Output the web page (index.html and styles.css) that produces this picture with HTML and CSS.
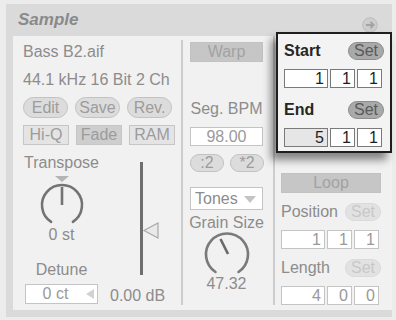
FILE: index.html
```html
<!DOCTYPE html>
<html>
<head>
  <meta charset="UTF-8">
  <title>Sample</title>
  <link rel="stylesheet" href="styles.css">
</head>
<body>
  <div class="panel">
    <div class="header">
      <div class="title">Sample</div>
      <div class="header-btn">
        <svg width="16" height="16" viewBox="0 0 16 16">
          <circle cx="8" cy="8" r="7.3" fill="#cdcdcd" stroke="#bcbcbc"/>
          <path d="M4 8 H11.5 M8.5 5 L11.5 8 L8.5 11" stroke="#a4a4a4" stroke-width="2" fill="none"/>
        </svg>
      </div>
    </div>

    <div class="content">
      <!-- colonne gauche : fichier, boutons, transpose, volume -->
      <div class="col col-left">
        <div class="info">
          <div>Bass B2.aif</div>
          <div>44.1 kHz 16 Bit 2 Ch</div>
        </div>
        <div class="btn-row pills">
          <div class="pill">Edit</div>
          <div class="pill">Save</div>
          <div class="pill">Rev.</div>
        </div>
        <div class="btn-row rects">
          <div class="rect">Hi-Q</div>
          <div class="rect on">Fade</div>
          <div class="rect">RAM</div>
        </div>
        <div class="lower">
          <div class="transpose">
            <div class="label">Transpose</div>
            <svg class="knob" width="50" height="54" viewBox="0 0 50 54">
              <polygon points="18,4 32,4 25,10" fill="#b4b4b4"/>
              <path d="M14.1 49.8 A20 20 0 1 1 35.9 49.8" stroke="#737373" stroke-width="2.6" fill="none" stroke-linecap="round"/>
              <line x1="25" y1="15" x2="25" y2="33" stroke="#737373" stroke-width="2.6"/>
            </svg>
            <div class="label">0 st</div>
            <div class="label detune">Detune</div>
            <div class="field ct">0 ct<span class="ct-arrow"></span></div>
          </div>
          <div class="volume">
            <svg width="70" height="125" viewBox="0 0 70 125">
              <line x1="41.5" y1="8" x2="41.5" y2="121" stroke="#6e6e6e" stroke-width="3"/>
              <polygon points="58,69 58,84 44,76.5" fill="#e9e9e9" stroke="#a8a8a8" stroke-width="1.2"/>
            </svg>
            <div class="db">0.00 dB</div>
          </div>
        </div>
      </div>

      <!-- colonne du milieu : warp -->
      <div class="col col-mid">
        <div class="rect wide warp">Warp</div>
        <div class="label center seg">Seg. BPM</div>
        <div class="field bpm">98.00</div>
        <div class="btn-row halves">
          <div class="pill small">:2</div>
          <div class="pill small">*2</div>
        </div>
        <div class="dropdown">Tones<span class="drop-arrow"></span></div>
        <div class="label center grain">Grain Size</div>
        <svg class="knob" width="50" height="43" viewBox="0 0 50 43">
          <path d="M13.5 40 A21 21 0 1 1 36.5 40" stroke="#7a7a7a" stroke-width="2.6" fill="none" stroke-linecap="round"/>
          <line x1="26" y1="22" x2="18.5" y2="7" stroke="#6a6a6a" stroke-width="2.6"/>
        </svg>
        <div class="label center">47.32</div>
      </div>

      <!-- colonne droite : loop -->
      <div class="col col-right">
        <div class="rect wide loop">Loop</div>
        <div class="set-row">
          <span>Position</span>
          <div class="pill set faded">Set</div>
        </div>
        <div class="bbs">
          <div class="box first">1</div>
          <div class="box">1</div>
          <div class="box">1</div>
        </div>
        <div class="set-row">
          <span>Length</span>
          <div class="pill set faded">Set</div>
        </div>
        <div class="bbs">
          <div class="box first">4</div>
          <div class="box">0</div>
          <div class="box">0</div>
        </div>
      </div>
    </div>

    <!-- popup Start / End par-dessus -->
    <div class="popup">
      <div class="set-row">
        <span class="strong">Start</span>
        <div class="pill set dark">Set</div>
      </div>
      <div class="bbs">
        <div class="box first">1</div>
        <div class="box">1</div>
        <div class="box">1</div>
      </div>
      <div class="set-row end">
        <span class="strong">End</span>
        <div class="pill set dark">Set</div>
      </div>
      <div class="bbs">
        <div class="box first grey">5</div>
        <div class="box">1</div>
        <div class="box">1</div>
      </div>
    </div>
  </div>
</body>
</html>
```

FILE: styles.css
```css
body {
  margin: 0;
  background-color: #ececec;
  font-family: 'Liberation Sans', Arial, sans-serif;
  font-size: 16px;
  color: #8c8c8c;
}

.panel {
  position: relative;
  margin: 4px 0 0 6px;
  width: 386px;
  background-color: #dadada;
  padding: 0 0 7px 7px;
  box-sizing: border-box;
}

.header {
  height: 32px;
  display: flex;
  justify-content: space-between;
  align-items: center;
  margin-left: -7px;
  padding: 0 14px 0 12px;
}

.title {
  font-size: 17px;
  font-weight: bold;
  font-style: italic;
  color: #8a8a8a;
}

.header-btn {
  display: flex;
  margin-top: 10px;
}

.content {
  display: flex;
  height: 274px;
  background-color: #f1f1f1;
}

.col {
  box-sizing: border-box;
  display: flex;
  flex-direction: column;
}

.col-left {
  width: 170px;
  padding: 0 0 0 10px;
  border-right: 2px solid #cdcdcd;
  margin: 4px 0 5px 0;
}

.info {
  line-height: 28px;
  margin-top: -2px;
}

.btn-row {
  display: flex;
  gap: 7px;
}

.pills {
  margin-top: 3px;
}

.rects {
  margin-top: 7px;
}

.pill {
  height: 21px;
  width: 45px;
  box-sizing: border-box;
  border: 1px solid #c2c2c2;
  border-radius: 11px;
  background-color: #dcdcdc;
  color: #9c9c9c;
  line-height: 19px;
  text-align: center;
}

.rect {
  height: 20px;
  width: 46px;
  box-sizing: border-box;
  border: 1px solid #c6c6c6;
  background-color: #e4e4e4;
  color: #9c9c9c;
  line-height: 18px;
  text-align: center;
}

.rect.on {
  background-color: #cecece;
}

.lower {
  display: flex;
  margin-top: 9px;
}

.transpose {
  width: 77px;
  display: flex;
  flex-direction: column;
  align-items: center;
}

.label {
  line-height: 18px;
  white-space: nowrap;
}

.knob {
  display: block;
}

.detune {
  margin-top: 17px;
}

.field {
  box-sizing: border-box;
  height: 20px;
  border: 1px solid #c4c4c4;
  background-color: #ffffff;
  color: #9a9a9a;
  text-align: center;
  line-height: 18px;
}

.ct {
  position: relative;
  width: 73px;
  margin-top: 5px;
  padding-right: 12px;
}

.ct-arrow {
  position: absolute;
  right: 3px;
  top: 4px;
  border-style: solid;
  border-width: 5px 8px 5px 0;
  border-color: transparent #d2d2d2 transparent transparent;
}

.volume {
  flex: 1;
  display: flex;
  flex-direction: column;
}

.volume svg {
  display: block;
}

.db {
  line-height: 18px;
  margin-top: 8px;
  padding-left: 10px;
}

.col-mid {
  width: 92px;
  padding: 6px 0 0 7px;
  border-right: 2px solid #cdcdcd;
  margin-bottom: 5px;
  align-items: flex-start;
}

.wide {
  height: 20px;
  background-color: #c6c6c6;
  border-color: #c2c2c2;
  color: #a2a2a2;
}

.warp {
  width: 73px;
}

.center {
  width: 73px;
  display: flex;
  justify-content: center;
}

.seg {
  margin-top: 38px;
}

.bpm {
  width: 73px;
  height: 19px;
  margin-top: 9px;
  line-height: 17px;
}

.halves {
  margin-top: 8px;
  gap: 6px;
}

.pill.small {
  width: 34px;
  height: 18px;
  line-height: 16px;
}

.dropdown {
  position: relative;
  box-sizing: border-box;
  width: 73px;
  height: 23px;
  margin-top: 15px;
  border: 1px solid #c4c4c4;
  background-color: #ffffff;
  line-height: 21px;
  padding-left: 4px;
  color: #8c8c8c;
}

.drop-arrow {
  position: absolute;
  right: 6px;
  top: 8px;
  border-style: solid;
  border-width: 7px 6px 0 6px;
  border-color: #c4c4c4 transparent transparent transparent;
}

.grain {
  margin-top: 4px;
}

.col-mid .knob {
  margin: 0 0 0 12px;
}

.col-right {
  flex: 1;
  padding: 137px 0 0 6px;
}

.loop {
  width: 100px;
}

.set-row {
  display: flex;
  justify-content: space-between;
  align-items: center;
  width: 100px;
  height: 18px;
  line-height: 18px;
  margin-top: 10px;
}

.pill.set {
  width: 36px;
  height: 18px;
  line-height: 16px;
}

.pill.faded {
  color: #c8c8c8;
  border-color: #dadada;
  background-color: #e2e2e2;
}

.bbs {
  display: flex;
  gap: 2px;
  margin-top: 9px;
}

.box {
  box-sizing: border-box;
  width: 25px;
  height: 19px;
  border: 1px solid #c4c4c4;
  background-color: #ffffff;
  color: #999999;
  text-align: right;
  padding-right: 3px;
  line-height: 17px;
}

.box.first {
  width: 44px;
}

.popup {
  position: absolute;
  left: 270px;
  top: 28px;
  width: 116px;
  height: 121px;
  box-sizing: border-box;
  border: 2px solid #1e1e1e;
  background-color: #f3f3f3;
  padding: 0 0 0 6px;
  box-shadow: -5px 7px 8px rgba(0, 0, 0, 0.45);
}

.popup .set-row {
  margin-top: 8px;
}

.popup .set-row.end {
  margin-top: 13px;
}

.strong {
  font-weight: bold;
  color: #262626;
}

.pill.dark {
  background-color: #a9a9a9;
  border-color: #8e8e8e;
  color: #5a5a5a;
}

.popup .box {
  border-color: #7a7a7a;
  color: #1e1e1e;
}

.popup .box.grey {
  background-color: #e6e6e6;
}
```
